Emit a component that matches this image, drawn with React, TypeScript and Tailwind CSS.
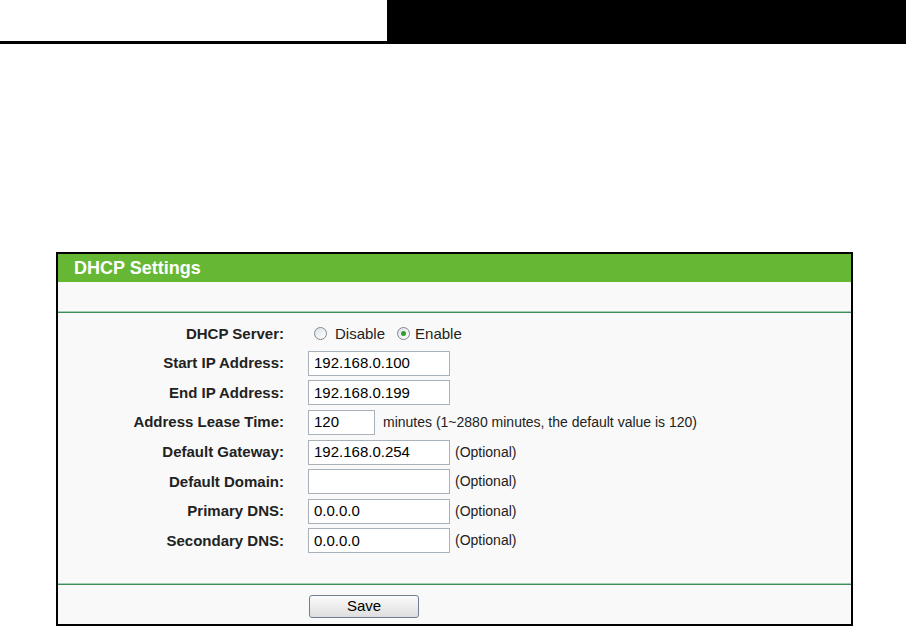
import React from "react";

type Row = {
  label: string;
  value?: string;
  short?: boolean;
  note?: string;
};

const rows: Row[] = [
  { label: "Start IP Address:", value: "192.168.0.100" },
  { label: "End IP Address:", value: "192.168.0.199" },
  { label: "Address Lease Time:", value: "120", short: true, note: "minutes (1~2880 minutes, the default value is 120)" },
  { label: "Default Gateway:", value: "192.168.0.254", note: "(Optional)" },
  { label: "Default Domain:", value: "", note: "(Optional)" },
  { label: "Primary DNS:", value: "0.0.0.0", note: "(Optional)" },
  { label: "Secondary DNS:", value: "0.0.0.0", note: "(Optional)" },
];

function Radio({ checked }: { checked?: boolean }) {
  return (
    <span className="flex h-[13px] w-[13px] items-center justify-center rounded-full border border-[#7f8891] bg-gradient-to-br from-[#dfe2e5] to-white">
      {checked ? <span className="h-[5px] w-[5px] rounded-full bg-[#2f9e2f]" /> : null}
    </span>
  );
}

function Label({ children }: { children: React.ReactNode }) {
  return <div className="w-[226px] shrink-0 text-right text-[15px] font-bold text-[#222]">{children}</div>;
}

function GreenRule() {
  return (
    <div className="flex flex-col">
      <div className="h-px bg-[#a8cdb5]" />
      <div className="h-px bg-[#3e8a5b]" />
    </div>
  );
}

export default function App() {
  return (
    <div className="h-[626px] w-[906px] overflow-hidden bg-white font-['Liberation_Sans',Arial,sans-serif]">
      <div className="flex h-[44px]">
        <div className="flex w-[387px] flex-col justify-end">
          <div className="h-[3px] bg-black" />
        </div>
        <div className="flex-1 bg-black" />
      </div>

      <div className="ml-[56px] mt-[208px] w-[797px] border-2 border-black bg-[#f9f9f9]">
        <div className="flex h-[28px] items-center bg-[#66b834] pl-[16px] text-[18px] font-bold text-white">
          DHCP Settings
        </div>
        <div className="h-[29px]" />
        <GreenRule />

        <div className="h-[270px] pt-[6px]">
          <div className="flex h-[29.6px] items-center gap-[24px]">
            <Label>DHCP Server:</Label>
            <div className="flex items-center text-[15px] text-[#222]">
              <span className="ml-[6px]">
                <Radio />
              </span>
              <span className="ml-[8px]">Disable</span>
              <span className="ml-[12px]">
                <Radio checked />
              </span>
              <span className="ml-[5px]">Enable</span>
            </div>
          </div>
          {rows.map((row) => (
            <div key={row.label} className="flex h-[29.6px] items-center gap-[24px]">
              <Label>{row.label}</Label>
              <div className="flex items-center">
                <div
                  className={`flex h-[25px] items-center border border-[#a9b1bb] bg-white pl-[5px] text-[15px] text-black ${
                    row.short ? "w-[67px]" : "w-[142px]"
                  }`}
                >
                  {row.value}
                </div>
                {row.note ? (
                  <span className={`text-[14px] text-[#222] ${row.short ? "ml-[8px]" : "ml-[5px]"}`}>{row.note}</span>
                ) : null}
              </div>
            </div>
          ))}
        </div>

        <GreenRule />
        <div className="h-[39px] pl-[251px] pt-[10px]">
          <button
            type="button"
            className="flex h-[23px] w-[110px] items-center justify-center rounded-[3px] border border-[#6f7f92] bg-gradient-to-b from-[#fbfbfb] to-[#dedede] text-[15px] text-black"
          >
            Save
          </button>
        </div>
      </div>
    </div>
  );
}
